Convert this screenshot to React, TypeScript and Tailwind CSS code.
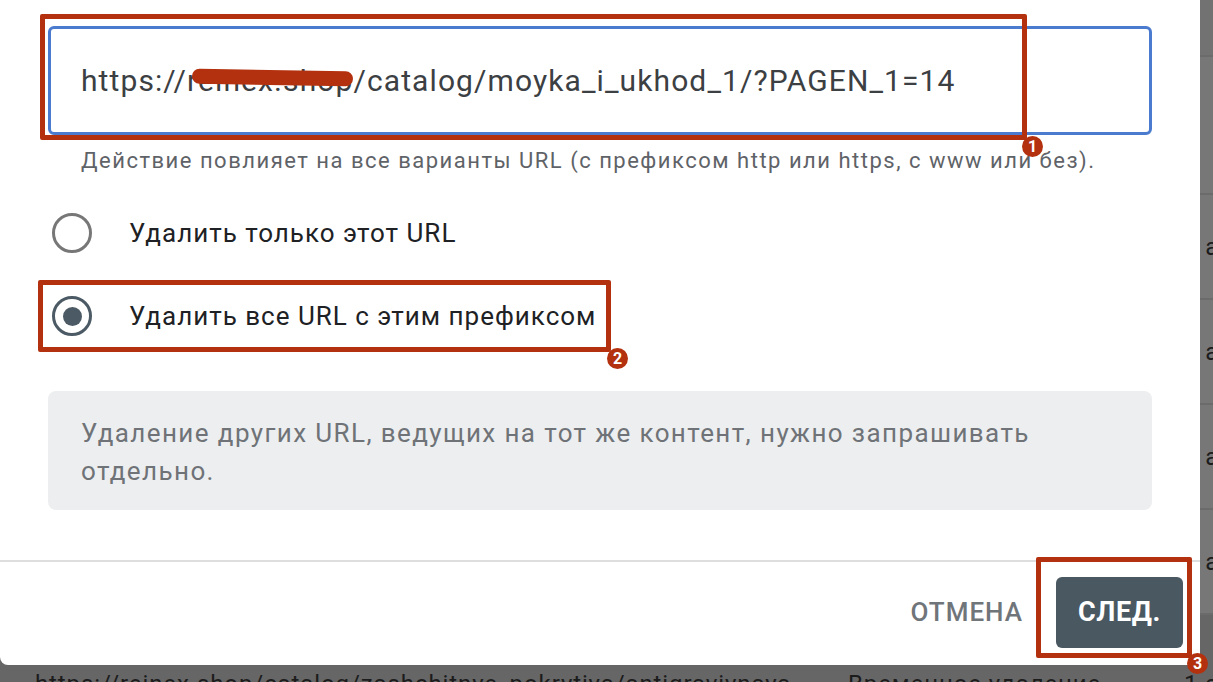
const Badge = ({ n, className }: { n: number; className: string }) => (
  <span
    className={`absolute flex h-[21px] w-[21px] items-center justify-center rounded-full bg-[#b3310e] text-[16px] font-bold leading-none text-white ${className}`}
  >
    {n}
  </span>
);

const rows = [
  { h: "h-[138px]", date: "" },
  { h: "h-[105px]", date: "1 авг. 2023 г." },
  { h: "h-[105px]", date: "1 авг. 2023 г." },
  { h: "h-[105px]", date: "1 авг. 2023 г." },
  { h: "h-[105px]", date: "1 авг. 2023 г." },
];

export default function App() {
  return (
    <div className="relative h-[682px] w-[1213px] overflow-hidden bg-[#777777] font-['Roboto',sans-serif]">
      {/* table behind the modal */}
      <div className="flex flex-col text-[24px] leading-[28px] tracking-[0.9px] text-[#1c1c1c]">
        <div className="h-[57px] border-b-2 border-[#6b6b6b] bg-[#727272]" />
        {rows.map((r, i) => (
          <div key={i} className={`flex items-center border-b-2 border-[#6b6b6b] ${r.h}`}>
            <span className="w-[848px] shrink-0 pl-[35px]">https://reinex.shop/catalog/</span>
            <span className="w-[336px] shrink-0">Временное удаление</span>
            <span className="whitespace-nowrap">{r.date}</span>
          </div>
        ))}
        <div className="flex h-[120px] items-start bg-[#666666] pt-[55px]">
          <span className="w-[848px] shrink-0 whitespace-nowrap pl-[35px]">
            https://reinex.shop/catalog/zashchitnye_pokrytiya/antigraviynaya
          </span>
          <span className="w-[336px] shrink-0 whitespace-nowrap">Временное удаление</span>
          <span className="whitespace-nowrap">1 авг. 2023 г.</span>
        </div>
      </div>

      {/* modal */}
      <div className="absolute left-0 top-0 flex h-[665px] w-[1200px] flex-col rounded-b-[8px] bg-white">
        <div className="flex flex-col px-[48px] pt-[26px]">
          <div className="relative">
            <div className="flex h-[109px] items-center rounded-[6px] border-[3px] border-[#4a7bcf] pl-[30px] text-[30px] tracking-[1.1px] text-[#3c4043]">
              https://
              <span className="relative">
                reinex.shop
                <span className="absolute left-[5px] right-0 top-[12px] h-[15px] rotate-[1deg] rounded-full bg-[#b3310e]" />
              </span>
              /catalog/moyka_i_ukhod_1/?PAGEN_1=14
            </div>
            <div className="absolute left-[-8px] top-[-12px] h-[126px] w-[987px] rounded-[2px] border-[5px] border-[#b3310e]" />
            <Badge n={1} className="left-[974px] top-[110px]" />
          </div>

          <p className="mt-[12px] pl-[33px] text-[22px] leading-[28px] tracking-[1.5px] text-[#5f6368]">
            Действие повлияет на все варианты URL (с префиксом http или https, с www или без).
          </p>

          <div className="mt-[30px] flex flex-col gap-[27px]">
            <label className="flex h-[56px] items-center gap-[37px] pl-[4px]">
              <span className="h-[40px] w-[40px] rounded-full border-[3.5px] border-[#777777]" />
              <span className="text-[26px] tracking-[1px] text-[#202124]">Удалить только этот URL</span>
            </label>
            <div className="relative">
              <label className="flex h-[56px] items-center gap-[37px] pl-[4px]">
                <span className="flex h-[40px] w-[40px] items-center justify-center rounded-full border-[3.5px] border-[#4b5a64]">
                  <span className="h-[19px] w-[19px] rounded-full bg-[#4b5a64]" />
                </span>
                <span className="text-[26px] tracking-[1px] text-[#202124]">Удалить все URL с этим префиксом</span>
              </label>
              <div className="absolute left-[-10px] top-[-8px] h-[72px] w-[573px] rounded-[2px] border-[5px] border-[#b3310e]" />
              <Badge n={2} className="left-[559px] top-[60px]" />
            </div>
          </div>

          <div className="mt-[47px] h-[119px] rounded-[8px] bg-[#edeef0] px-[33px] pt-[23px]">
            <p className="max-w-[960px] text-[26px] leading-[38px] tracking-[1.4px] text-[#6f7377]">
              Удаление других URL, ведущих на тот же контент, нужно запрашивать отдельно.
            </p>
          </div>
        </div>

        <div className="mt-[50px] border-t-2 border-[#dedede]" />

        <div className="flex items-center justify-end gap-[17px] pr-[17px] pt-[15px]">
          <button className="px-[16px] text-[26px] font-medium tracking-[1px] text-[#70757a]">ОТМЕНА</button>
          <div className="relative">
            <button className="h-[71px] w-[127px] rounded-[6px] bg-[#4a5862] text-[27px] font-bold tracking-[0.6px] text-white">
              СЛЕД.
            </button>
            <div className="absolute left-[-20px] top-[-20px] h-[101px] w-[156px] rounded-[2px] border-[5px] border-[#b3310e]" />
            <Badge n={3} className="left-[131px] top-[76px]" />
          </div>
        </div>
      </div>
    </div>
  );
}
